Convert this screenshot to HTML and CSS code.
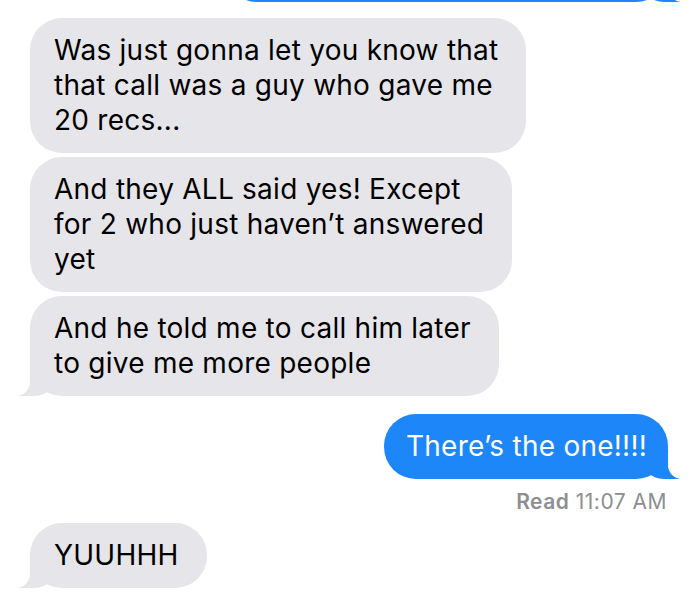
FILE: index.html
```html
<!DOCTYPE html>
<html lang="en">
<head>
<meta charset="utf-8">
<title>Messages</title>
<link rel="stylesheet" href="styles.css">
</head>
<body>
<main class="thread">
  <div class="bubble out tail-right partial" aria-hidden="true"></div>
  <div class="bubble in first">Was just gonna let you know that<br>that call was a guy who gave me<br>20 recs...</div>
  <div class="bubble in">And they ALL said yes! Except<br>for 2 who just haven’t answered<br>yet</div>
  <div class="bubble in tail-left">And he told me to call him later<br>to give me more people</div>
  <div class="bubble out tail-right sent">There’s the one!!!!</div>
  <div class="receipt"><span class="receipt-label">Read</span> 11:07 AM</div>
  <div class="bubble in tail-left last">YUUHHH</div>
</main>
</body>
</html>
```

FILE: styles.css
```css
html, body {
  margin: 0;
  padding: 0;
  background: #ffffff;
}

body {
  font-family: Inter, "Liberation Sans", sans-serif;
  -webkit-font-smoothing: antialiased;
}

.thread {
  display: flex;
  flex-direction: column;
  gap: 4px;
  padding: 0 32px 0 30px;
  overflow: hidden;
  height: 597px;
  box-sizing: border-box;
}

.bubble {
  position: relative;
  z-index: 0;
  font-size: 28px;
  line-height: 35px;
  letter-spacing: 0.25px;
  padding: 15px 28px 15px 24px;
  border-radius: 32px;
  white-space: nowrap;
}

.in {
  align-self: flex-start;
  background: #e5e5ea;
  color: #000000;
}

.out {
  align-self: flex-end;
  background: #1d86f9;
  color: #ffffff;
  padding: 15px 21px 15px 22px;
}

.tail-left::before,
.tail-left::after,
.tail-right::before,
.tail-right::after {
  content: "";
  position: absolute;
  z-index: -1;
  bottom: 0;
  height: 30px;
}

.tail-left::before {
  left: -12px;
  width: 40px;
  background: #e5e5ea;
  border-bottom-right-radius: 24px;
}

.tail-left::after {
  left: -20px;
  width: 20px;
  background: #ffffff;
  border-bottom-right-radius: 14px;
}

.tail-right::before {
  right: -12px;
  width: 40px;
  background: #1d86f9;
  border-bottom-left-radius: 24px;
}

.tail-right::after {
  right: -20px;
  width: 20px;
  background: #ffffff;
  border-bottom-left-radius: 14px;
}

.partial {
  flex: 0 0 auto;
  width: 400px;
  height: 70px;
  margin-top: -98px;
}

.first {
  margin-top: 12px;
}

.sent {
  margin-top: 14px;
}

.receipt {
  align-self: flex-end;
  font-size: 21px;
  line-height: 24px;
  letter-spacing: 0.5px;
  color: #8e8e93;
  margin-top: 7px;
  margin-right: 1px;
}

.receipt-label {
  font-weight: 600;
}

.last {
  margin-top: 5px;
}
```
